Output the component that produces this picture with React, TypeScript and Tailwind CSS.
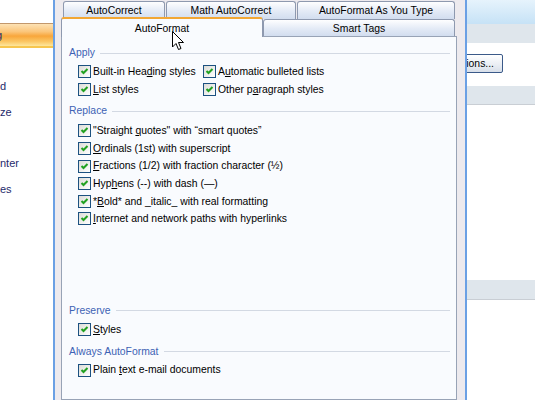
import React from "react";

const Check = () => (
  <span className="w-[13px] h-[13px] shrink-0 border border-[#1c5180] bg-[linear-gradient(135deg,#dcdcd7,#ffffff)] flex items-center justify-center">
    <svg width="11" height="11" viewBox="0 0 11 11">
      <path d="M2.5 5 L4.5 7 L8.5 3" fill="none" stroke="#21a121" strokeWidth="2" />
    </svg>
  </span>
);

const Row = ({ children }: { children: React.ReactNode }) => (
  <div className="h-[17.6px] flex items-center gap-[2px] whitespace-nowrap">
    <Check />
    <span>{children}</span>
  </div>
);

const Header = ({ title, cls }: { title: string; cls: string }) => (
  <div className={"h-[14px] flex items-center gap-[5px] pr-[6px] text-[#3d62b4] " + cls}>
    <span className="whitespace-nowrap">{title}</span>
    <span className="flex-1 h-px bg-[#d3d9e3]" />
  </div>
);

const Tab = ({ cls, children }: { cls: string; children: React.ReactNode }) => (
  <div
    className={
      "h-[18px] pt-[1px] flex items-center justify-center border border-b-0 border-[#8e99af] rounded-t-[3px] bg-[linear-gradient(to_bottom,#fefeff,#e3eaf6_55%,#d2ddef)] whitespace-nowrap " +
      cls
    }
  >
    {children}
  </div>
);

const U = ({ children }: { children: React.ReactNode }) => <span className="underline underline-offset-[1px]">{children}</span>;

export default function App() {
  return (
    <div className="relative w-[535px] h-[400px] overflow-hidden flex bg-white font-['Liberation_Sans',Arial,sans-serif] text-[10.4px] text-black">
      {/* left options list */}
      <div className="w-[53px] shrink-0 overflow-hidden flex flex-col text-[11px] text-[#1f2b6c]">
        <div className="h-[23px] shrink-0" />
        <div className="h-[25px] shrink-0 flex items-center border-t border-t-[#c2976b] border-b-2 border-b-[#f7c64e] bg-[linear-gradient(to_bottom,#fde2b4_0%,#fbc57a_35%,#f8a63b_55%,#fbc765_80%,#fde79e_100%)]">
          <span className="ml-[-4px]">g</span>
        </div>
        <div className="h-[25.6px] shrink-0" />
        <div className="h-[25.6px] shrink-0 flex items-center"><span>d</span></div>
        <div className="h-[25.6px] shrink-0 flex items-center"><span>ze</span></div>
        <div className="h-[25.6px] shrink-0" />
        <div className="h-[25.6px] shrink-0 flex items-center"><span>nter</span></div>
        <div className="h-[25.6px] shrink-0 flex items-center"><span>es</span></div>
      </div>

      {/* dialog */}
      <div className="w-[414px] shrink-0 flex flex-col border-x-2 border-[#6ba0e4] bg-[#edeaee] pl-[6px] pr-[8px]">
        <div className="mt-[1px] h-[18px] shrink-0 flex pl-[2px] gap-[1px]">
          <Tab cls="w-[102px]">AutoCorrect</Tab>
          <Tab cls="w-[130px]">Math AutoCorrect</Tab>
          <Tab cls="w-[158px]">AutoFormat As You Type</Tab>
        </div>
        <div className="-mt-[2px] h-[19px] shrink-0 flex items-start relative z-10">
          <div className="w-[202px] h-[20px] pt-[1px] flex items-center justify-center border-x border-[#8e99af] border-t-2 border-t-[#f2a735] rounded-t-[3px] bg-[#f9fbfe]">
            AutoFormat
          </div>
          <div className="mt-[2px] w-[192px] h-[17px] pt-[2px] flex items-center justify-center border border-b-0 border-[#8e99af] rounded-t-[3px] bg-[linear-gradient(to_bottom,#fefeff,#e3eaf6_55%,#d2ddef)]">
            Smart Tags
          </div>
        </div>
        <div className="flex-1 border border-[#98a3b6] bg-[#f9fbfe] pl-[7px] flex flex-col">
          <Header title="Apply" cls="mt-[9px]" />
          <div className="mt-[3px] pl-[9px] grid grid-cols-[125px_auto]">
            <Row>Built-in Hea<U>d</U>ing styles</Row>
            <Row>A<U>u</U>tomatic bulleted lists</Row>
            <Row><U>L</U>ist styles</Row>
            <Row>Other p<U>a</U>ragraph styles</Row>
          </div>
          <Header title="Replace" cls="mt-[6px]" />
          <div className="mt-[4px] pl-[9px] flex flex-col">
            <Row>"Straight <U>q</U>uotes" with “smart quotes”</Row>
            <Row><U>O</U>rdinals (1st) with superscript</Row>
            <Row><U>F</U>ractions (1/2) with fraction character (½)</Row>
            <Row>Hyp<U>h</U>ens (--) with dash (—)</Row>
            <Row>*<U>B</U>old* and _italic_ with real formatting</Row>
            <Row><U>I</U>nternet and network paths with hyperlinks</Row>
          </div>
          <Header title="Preserve" cls="mt-[76px]" />
          <div className="mt-[3px] pl-[9px] flex flex-col">
            <Row><U>S</U>tyles</Row>
          </div>
          <Header title="Always AutoFormat" cls="mt-[6px]" />
          <div className="mt-[3px] pl-[9px] flex flex-col">
            <Row>Plain <U>t</U>ext e-mail documents</Row>
          </div>
        </div>
      </div>

      {/* right background */}
      <div className="flex-1 min-w-0 overflow-hidden flex flex-col">
        <div className="h-[24px] shrink-0 bg-[linear-gradient(to_bottom,#e6f3fc,#c6e2f6)]" />
        <div className="h-[19px] shrink-0 bg-[#dfe6ec]" />
        <div className="mt-[11px] h-[19px] shrink-0 flex justify-end pr-[32px]">
          <div className="shrink-0 whitespace-nowrap h-[19px] px-[8px] flex items-center border border-[#3b5a89] rounded-[2px] bg-[linear-gradient(to_bottom,#ffffff,#e9edf3_60%,#d8dfe9)]">
            AutoCorrect Options...
          </div>
        </div>
        <div className="mt-[13px] h-[19px] shrink-0 bg-[#dfe6ec] border-b border-[#c9ced4]" />
        <div className="mt-[175px] h-[20px] shrink-0 bg-[#dfe6ec] border-b border-[#c9ced4]" />
      </div>

      {/* mouse cursor */}
      <svg className="absolute left-[172px] top-[31px] z-20" width="13" height="20" viewBox="0 0 13 20">
        <path d="M0.5 0.5 L0.5 16 L4 12.5 L6.5 18.5 L9 17.5 L6.5 11.5 L11.5 11.5 Z" fill="#ffffff" stroke="#000000" strokeWidth="1" strokeLinejoin="miter" />
      </svg>
    </div>
  );
}
